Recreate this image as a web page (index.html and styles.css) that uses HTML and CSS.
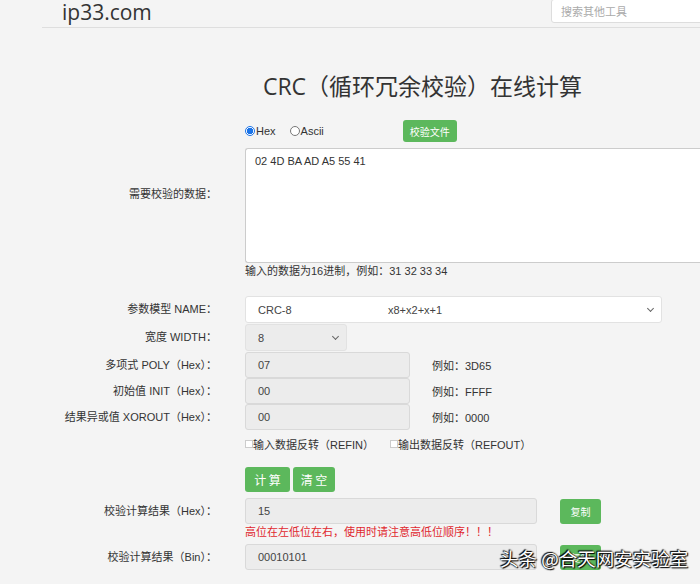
FILE: index.html
```html
<!DOCTYPE html>
<html lang="zh-CN">
<head>
    <meta charset="UTF-8">
    <meta name="viewport" content="width=device-width, initial-scale=1.0">
    <title>CRC（循环冗余校验）在线计算</title>
    <link rel="stylesheet" href="styles.css">
</head>
<body>
    <div class="header">
        <div class="logo">ip33.com</div>
        <input class="search" type="text" placeholder="搜索其他工具">
    </div>

    <h1 class="title">CRC（循环冗余校验）在线计算</h1>

    <div class="form">
        <div></div>
        <div class="radio-row">
            <label class="radio"><span class="dot checked"></span>Hex</label>
            <label class="radio"><span class="dot"></span>Ascii</label>
            <button class="btn btn-file">校验文件</button>
        </div>

        <div class="label label-data">需要校验的数据：</div>
        <div class="field">
            <textarea class="data">02 4D BA AD A5 55 41</textarea>
            <div class="hint">输入的数据为16进制，例如：31 32 33 34</div>
        </div>

        <div class="label row-name">参数模型 NAME：</div>
        <div class="field row-name">
            <div class="select select-name">
                <span class="opt-name">CRC-8</span><span>x8+x2+x+1</span>
                <span class="caret"></span>
            </div>
        </div>

        <div class="label row-width">宽度 WIDTH：</div>
        <div class="field row-width">
            <div class="select select-width">8<span class="caret"></span></div>
        </div>

        <div class="label">多项式 POLY（Hex）：</div>
        <div class="field inline">
            <div class="input short">07</div>
            <span class="example">例如：3D65</span>
        </div>

        <div class="label">初始值 INIT（Hex）：</div>
        <div class="field inline">
            <div class="input short">00</div>
            <span class="example">例如：FFFF</span>
        </div>

        <div class="label">结果异或值 XOROUT（Hex）：</div>
        <div class="field inline">
            <div class="input short">00</div>
            <span class="example">例如：0000</span>
        </div>

        <div></div>
        <div class="check-row">
            <label class="check"><span class="box"></span>输入数据反转（REFIN）</label>
            <label class="check"><span class="box"></span>输出数据反转（REFOUT）</label>
        </div>

        <div></div>
        <div class="action-row">
            <button class="btn btn-big">计 算</button>
            <button class="btn btn-big">清 空</button>
        </div>

        <div class="label">校验计算结果（Hex）：</div>
        <div class="field">
            <div class="inline">
                <div class="input long">15</div>
                <button class="btn btn-copy">复制</button>
            </div>
            <div class="warn">高位在左低位在右，使用时请注意高低位顺序！！！</div>
        </div>

        <div class="label">校验计算结果（Bin）：</div>
        <div class="field inline">
            <div class="input long">00010101</div>
            <button class="btn btn-copy">复制</button>
        </div>
    </div>

    <div class="watermark">头条 @合天网安实验室</div>
</body>
</html>
```

FILE: styles.css
```css
:root {
    --green: #5cb85c;
    --border: #d9d9d9;
    --readonly: #ececec;
    --text: #333;
}

* {
    margin: 0;
    padding: 0;
    box-sizing: border-box;
}

body {
    background: #f4f4f4;
    color: var(--text);
    font-family: "Liberation Sans", "Noto Sans CJK SC", sans-serif;
    font-size: 11px;
    width: 700px;
    height: 584px;
    overflow: hidden;
    position: relative;
}

.header {
    display: flex;
    justify-content: space-between;
    align-items: flex-start;
    margin-left: 42px;
    height: 28px;
    border-bottom: 1px solid #dedede;
}

.logo {
    flex: none;
    margin-left: 20px;
    font-family: "Open Sans", sans-serif;
    font-size: 21px;
    line-height: 25px;
    color: #333;
}

.search {
    flex: none;
    width: 160px;
    height: 24px;
    margin-top: -1px;
    margin-right: -11px;
    border: 1px solid #ddd;
    border-radius: 3px;
    background: #fff;
    padding: 0 9px;
    font-family: "Noto Sans CJK SC", sans-serif;
    font-size: 11px;
}

.search::placeholder {
    color: #aaa;
}

.title {
    font-family: "Open Sans", "Noto Sans CJK SC", sans-serif;
    font-weight: 400;
    font-size: 23px;
    color: #333;
    text-align: center;
    margin: 42px 0 0 145px;
    line-height: 32px;
}

.form {
    display: grid;
    grid-template-columns: 217px 1fr;
    column-gap: 28px;
    margin-top: 17px;
}

.label {
    text-align: right;
    line-height: 26px;
    white-space: nowrap;
}

.label-data {
    align-self: center;
    padding-bottom: 50px;
}

.field {
    min-height: 26px;
}

.row-name,
.row-width {
    margin-bottom: 1px;
}

.row-name.label,
.row-width.label {
    line-height: 27px;
}

.inline {
    display: flex;
    align-items: center;
}

.radio-row {
    display: flex;
    align-items: center;
    height: 22px;
    margin-top: 1px;
}

.radio {
    display: flex;
    align-items: center;
    margin-right: 14px;
}

.dot {
    width: 10px;
    height: 10px;
    border: 1px solid #777;
    border-radius: 50%;
    margin-right: 1px;
    background: #fff;
}

.dot.checked {
    border-color: #1a73e8;
    background: radial-gradient(circle, #1a73e8 55%, #fff 60%);
}

.btn {
    background: var(--green);
    color: #fff;
    border: none;
    border-radius: 3px;
    font-family: "Noto Sans CJK SC", sans-serif;
}

.btn-file {
    width: 54px;
    height: 22px;
    font-size: 10px;
    margin-left: 65px;
}

.data {
    display: block;
    width: 470px;
    height: 115px;
    margin-top: 6px;
    border: 1px solid #ccc;
    border-right: none;
    border-radius: 3px 0 0 3px;
    background: #fff;
    padding: 6px 9px;
    font-family: "Liberation Sans", sans-serif;
    font-size: 11px;
    color: #333;
    resize: none;
}

.hint {
    line-height: 16px;
    margin-bottom: 17px;
}

.select {
    position: relative;
    display: flex;
    align-items: center;
    height: 27px;
    border: 1px solid #e2e2e2;
    border-radius: 3px;
    padding-left: 12px;
    color: #444;
}

.select-name {
    width: 417px;
    background: #fff;
}

.opt-name {
    width: 130px;
}

.select-width {
    width: 102px;
    background: var(--readonly);
}

.caret {
    position: absolute;
    right: 8px;
    top: 9px;
    width: 5px;
    height: 5px;
    border-right: 1px solid #666;
    border-bottom: 1px solid #666;
    transform: rotate(45deg);
}

.input {
    height: 26px;
    line-height: 24px;
    border: 1px solid var(--border);
    border-radius: 3px;
    background: var(--readonly);
    padding-left: 12px;
    color: #444;
}

.short {
    width: 165px;
}

.long {
    width: 292px;
}

.example {
    margin-left: 22px;
}

.check-row {
    display: flex;
    align-items: center;
    height: 27px;
}

.check {
    display: flex;
    align-items: center;
    width: 145px;
}

.box {
    width: 8px;
    height: 8px;
    border: 1px solid #ccc;
    background: #fff;
}

.action-row {
    display: flex;
    gap: 3px;
    margin-top: 10px;
    margin-bottom: 6px;
}

.btn-big {
    width: 45px;
    height: 25px;
    font-size: 12px;
}

.btn-big + .btn-big {
    width: 42px;
}

.btn-copy {
    width: 41px;
    height: 25px;
    font-size: 10px;
    margin-left: 23px;
}

.warn {
    color: #e0282e;
    line-height: 17px;
    margin-bottom: 3px;
}

.watermark {
    position: absolute;
    left: 500px;
    top: 545px;
    font-family: "Noto Sans CJK SC", sans-serif;
    font-size: 18.5px;
    color: #fff;
    text-shadow: 0 0 2px #000, 1px 1px 1px #000, -1px -1px 1px #000;
}
```
